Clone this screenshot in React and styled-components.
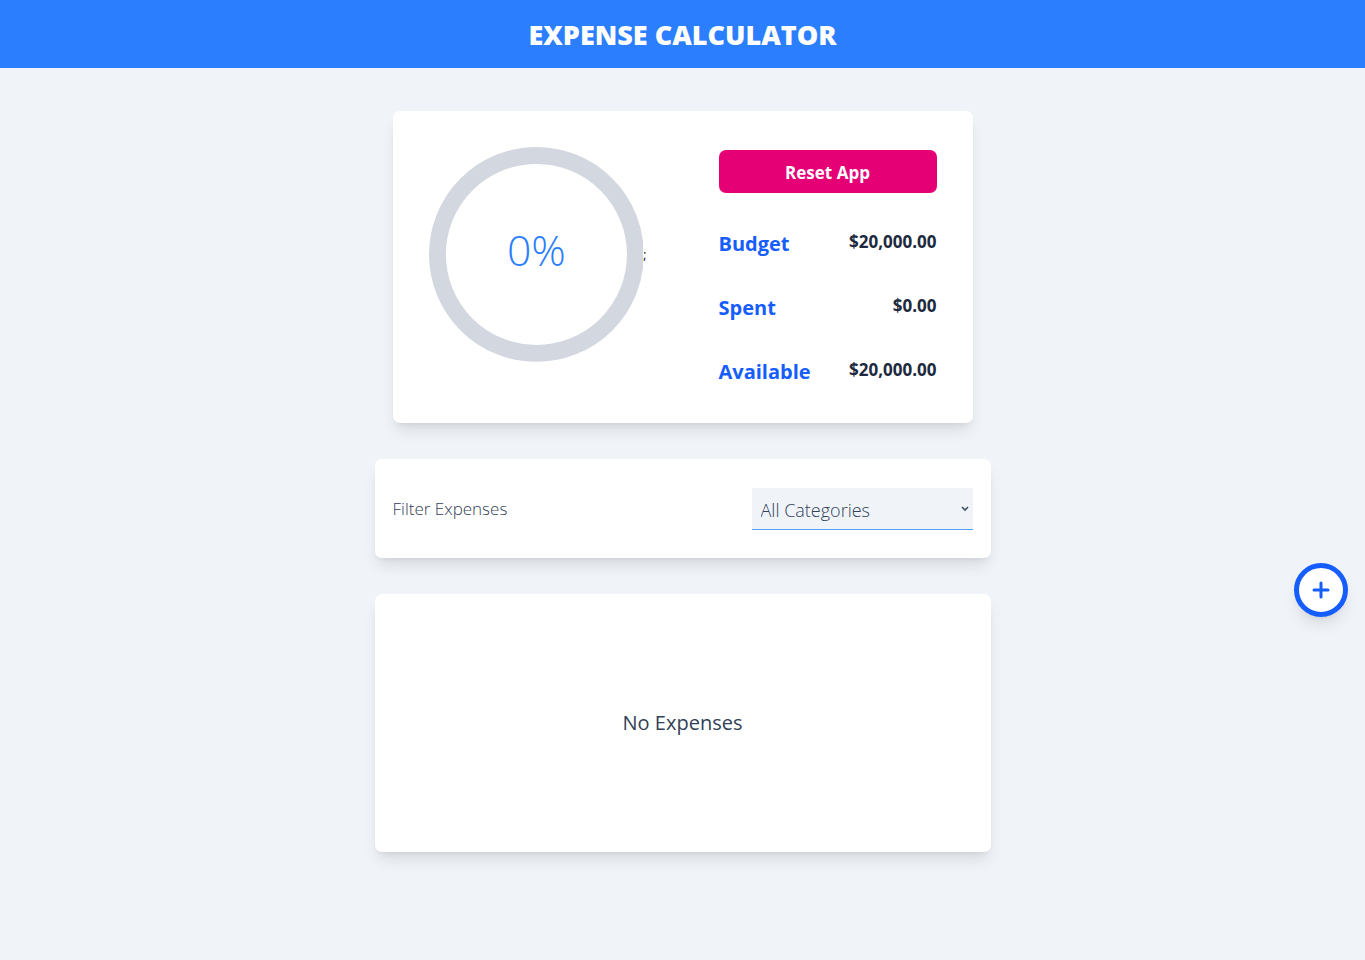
import { useState } from "react";
import styled, { createGlobalStyle } from "styled-components";

const GlobalStyle = createGlobalStyle`
  *, *::before, *::after { box-sizing: border-box; }
  body {
    margin: 0;
    background: #f0f4f9;
    color: #000;
    font-family: "Open Sans", "Noto Sans", sans-serif;
    font-size: 18px;
    line-height: 30px;
  }
`;

const Header = styled.header`
  background: #2b7fff;
  padding: 19px 18px 17px;
`;

const Title = styled.h1`
  margin: 0;
  color: #fff;
  font-size: 27px;
  line-height: 32px;
  font-weight: 800;
  text-align: center;
  text-transform: uppercase;
`;

const Page = styled.main`
  display: flex;
  flex-direction: column;
  gap: 36px;
  max-width: 652px;
  margin: 0 auto;
  padding: 43px 18px 36px;
`;

const Card = styled.section`
  background: #fff;
  border-radius: 7px;
  box-shadow: 0 10px 15px -3px rgba(0, 0, 0, 0.1), 0 4px 6px -4px rgba(0, 0, 0, 0.1);
`;

const Tracker = styled(Card)`
  display: grid;
  grid-template-columns: 1fr 1fr;
  gap: 72px;
  margin: 0 18px;
  padding: 36px;
`;

const ChartColumn = styled.div`
  display: flex;
  align-items: flex-start;
  font-size: 12px;
  line-height: 216px;
`;

const Ring = styled.svg`
  flex: 1;
  min-width: 0;
  display: block;
`;

const Figures = styled.div`
  display: flex;
  flex-direction: column;
  gap: 34px;
  padding-top: 3px;
`;

const ResetButton = styled.button`
  width: 100%;
  height: 43px;
  margin-bottom: 2px;
  padding: 2px 0 0;
  border: 0;
  border-radius: 7px;
  background: #e60076;
  color: #fff;
  font: inherit;
  font-size: 17px;
  font-weight: 700;
  cursor: pointer;
`;

const Amount = styled.p`
  display: flex;
  justify-content: space-between;
  margin: 0;
  color: #155dfc;
  font-size: 20px;
  font-weight: 700;
`;

const Value = styled.span`
  color: #1d293d;
  font-size: 17px;
  line-height: 26px;
`;

const Filter = styled(Card)`
  padding: 29px 18px 28px;
`;

const FilterForm = styled.form`
  display: flex;
  align-items: center;
  justify-content: space-between;
  color: #314158;
  font-size: 17px;
  font-weight: 300;
`;

const SelectBox = styled.div`
  position: relative;
  width: 221px;
`;

const Select = styled.select`
  display: block;
  appearance: none;
  width: 100%;
  height: 42px;
  padding: 2px 20px 0 9px;
  border: 0;
  border-bottom: 1px solid #51a2ff;
  border-radius: 0;
  background: #f0f4f9;
  color: #314158;
  font: inherit;
  font-size: 18px;
`;

const Chevron = styled.svg`
  position: absolute;
  right: 4px;
  top: 18px;
  pointer-events: none;
`;

const List = styled(Card)`
  display: grid;
  place-items: center;
  min-height: 258px;
`;

const Empty = styled.p`
  margin: 0;
  color: #314158;
  font-size: 20px;
`;

const AddButton = styled.button`
  position: fixed;
  right: 17px;
  bottom: 343px;
  display: grid;
  place-items: center;
  width: 54px;
  height: 54px;
  padding: 0;
  border: 5px solid #155dfc;
  border-radius: 50%;
  background: #fff;
  color: #155dfc;
  box-shadow: 0 10px 15px -3px rgba(0, 0, 0, 0.1), 0 4px 6px -4px rgba(0, 0, 0, 0.1);
  cursor: pointer;
`;

const money = new Intl.NumberFormat("en-US", { style: "currency", currency: "USD" });
const categories = ["All Categories", "Savings", "Food", "Home", "Health", "Leisure", "Other"];

export default function App() {
  const [category, setCategory] = useState(categories[0]);
  const totals = [
    ["Budget", 20000],
    ["Spent", 0],
    ["Available", 20000],
  ];

  return (
    <>
      <GlobalStyle />
      <Header>
        <Title>Expense Calculator</Title>
      </Header>
      <Page>
        <Tracker>
          <ChartColumn>
            <Ring viewBox="0 0 216 216" role="img" aria-label="0% of the budget spent">
              <circle cx="108" cy="108" r="99.5" fill="none" stroke="#d3d7e0" strokeWidth="17" />
              <text x="108" y="120" textAnchor="middle" fill="#2b7fff" fontSize="43" fontWeight="300">
                0%
              </text>
            </Ring>
            ;
          </ChartColumn>
          <Figures>
            <ResetButton type="button">Reset App</ResetButton>
            {totals.map(([label, value]) => (
              <Amount key={label}>
                {label}
                <Value>{money.format(value)}</Value>
              </Amount>
            ))}
          </Figures>
        </Tracker>
        <Filter>
          <FilterForm>
            <label htmlFor="category">Filter Expenses</label>
            <SelectBox>
              <Select id="category" value={category} onChange={(e) => setCategory(e.target.value)}>
                {categories.map((name) => (
                  <option key={name}>{name}</option>
                ))}
              </Select>
              <Chevron width="8" height="6" viewBox="0 0 8 6" fill="none" stroke="#45556c" strokeWidth="1.7" aria-hidden="true">
                <path d="M1 1l3 3 3-3" />
              </Chevron>
            </SelectBox>
          </FilterForm>
        </Filter>
        <List>
          <Empty>No Expenses</Empty>
        </List>
      </Page>
      <AddButton type="button" aria-label="Add expense">
        <svg width="18" height="18" viewBox="0 0 18 18" fill="none" stroke="currentColor" strokeWidth="3" strokeLinecap="round">
          <path d="M9 2v14M2 9h14" />
        </svg>
      </AddButton>
    </>
  );
}
